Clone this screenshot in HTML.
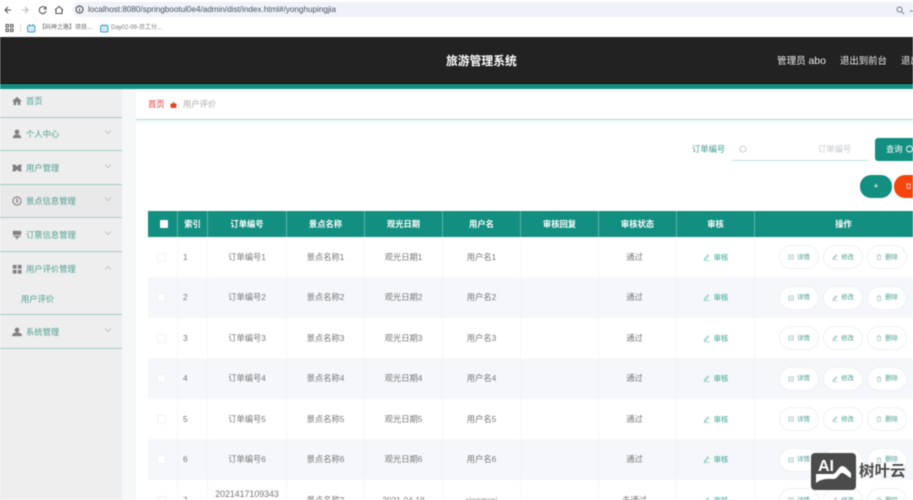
<!DOCTYPE html>
<html lang="zh"><head><meta charset="utf-8"><title>旅游管理系统</title>
<style>
*{box-sizing:border-box}
html,body{margin:0;padding:0;width:913px;height:500px;overflow:hidden;background:#fff}
body{position:relative;font-family:"Liberation Sans","Noto Sans CJK SC",sans-serif;color:#777}
.a{position:absolute;white-space:nowrap}
#soft{position:absolute;left:0;top:0;width:913px;height:500px;overflow:hidden;filter:blur(.45px)}
.side{position:absolute;left:0;width:122px;background:#eeeeee;border-bottom:1px solid #a3cbc5}
.side svg.i{position:absolute;left:12px;top:50%;margin-top:-5px;width:10px;height:10px;fill:#808080}
.side span{position:absolute;left:26px;top:50%;margin-top:-7px;line-height:14px;font-size:8.3px;color:#4f9f92}
.side svg.c{position:absolute;left:104px;top:50%;margin-top:-5px;width:8px;height:6px;fill:none;stroke:#b5bcbc;stroke-width:.8}
.row{position:absolute;left:148px;width:784px;display:grid;grid-template-columns:29px 30px 79px 78px 78px 78px 78px 78px 78px 178px;background:#fff}
.row>div{display:flex;align-items:center;justify-content:center;font-size:8.3px;line-height:11px;color:#777;border-left:1px solid #f6f7f9;text-align:center;position:relative}
.row>div:first-child{border-left:0}
.row.s{background:#f5f7fa}
.row.s>div{border-left-color:#f1f3f6}
.row.h{background:#128f80}
.row.h>div{color:#fff;font-weight:bold;border-left:1px solid #5ab6aa}
.row.h>div:first-child{border-left:0}
.row>div.n{justify-content:flex-start;padding-left:5px}
.row>div.st{padding-right:6px}
.cb{width:9px;height:9px;border:1px solid #eff1f3;background:#fff;border-radius:1px;display:block;margin-right:3px}
.h .cb{width:8px;height:8px;background:#fff;border-color:#fff;margin:0 0 0 2px}
.rv{color:#32a690!important;font-size:7.3px!important}
.rv svg{width:7px;height:7px;margin-right:4px;fill:none;stroke:#6cc2b2;stroke-width:.7}
.op{position:absolute;top:50%;margin-top:-12px;width:40px;height:24px;border:1px solid #eef0f2;border-radius:12px;background:#fff;font-size:6.4px;color:#4f9f92;display:flex;align-items:center;justify-content:center}
.op svg{width:6px;height:6px;margin-right:3px;fill:none;stroke:#86b5ad;stroke-width:.8}
.o1{left:24px}.o2{left:68px}.o3{left:112px}
</style></head><body>
<div id="soft">
<!-- browser chrome -->
<svg class="a" style="left:0;top:0" width="70" height="37" fill="none" stroke="#555" stroke-width="1.1">
<path d="M11 10H5M8 7l-3 3 3 3"/><path stroke="#bbb" d="M22 10h6M25 7l3 3-3 3"/>
<path d="M45.500 8a3.500 3.500 0 1 0 .6 3M46 6.500V9h-2.500"/><path d="M55 10l4-3.500 4 3.500M56 9.500V13.500h6V9.500"/>
<path stroke-width="1" d="M6 24.500h2.500v2.500H6zM10.500 24.500H13v2.500h-2.500zM6 29h2.500v2.500H6zM10.500 29H13v2.500h-2.500z"/></svg>
<div class="a" style="left:72px;top:2px;width:841px;height:15px;background:#f0f2fa;border-radius:8px 0 0 8px"></div>
<svg class="a" style="left:75px;top:5px" width="9" height="9" fill="none" stroke="#444"><circle cx="4.500" cy="4.500" r="3.500"/><path d="M4.500 4v2.500M4.500 2.500v.8"/></svg>
<div class="a" style="left:88px;top:4px;font-size:8.15px;line-height:11px;color:#45505f">localhost:8080/springbootul0e4/admin/dist/index.html#/yonghupingjia</div>
<svg class="a" style="left:896px;top:6px" width="17" height="9" fill="none" stroke="#777"><circle cx="3.500" cy="3.500" r="2.500"/><path d="M5.500 5.500l2.500 2.500M14 5h3"/></svg>
<div class="a" style="left:20px;top:24px;width:1px;height:8px;background:#ddd"></div>
<svg class="a" style="left:27px;top:24px" width="9" height="9" fill="#cfe9f4" stroke="#4a9fc4"><rect x=".5" y="1.500" width="7.500" height="6.500" rx="1.500"/><path d="M2.500 0v2M6 0v2"/></svg>
<div class="a" style="left:39px;top:23px;font-size:6px;line-height:10px;color:#666">【码神之路】项目...</div>
<svg class="a" style="left:100px;top:24px" width="9" height="9" fill="#cfe9f4" stroke="#4a9fc4"><rect x=".5" y="1.500" width="7.500" height="6.500" rx="1.500"/><path d="M2.500 0v2M6 0v2"/></svg>
<div class="a" style="left:111px;top:23px;font-size:6px;line-height:10px;color:#777">Day02-09-员工分...</div>

<!-- header -->
<div class="a" style="left:0;top:37px;width:913px;height:47px;background:#222;border-bottom:1px solid #111"></div>
<div class="a" style="left:0;top:84px;width:913px;height:5px;background:#128f80"></div>
<div class="a" style="left:446px;top:53px;font-size:11.800px;line-height:16px;font-weight:bold;color:#fff">旅游管理系统</div>
<div class="a" style="left:777px;top:54px;font-size:9.600px;line-height:14px;color:#eee">管理员 <span style="font-size:10.500px">abo</span></div>
<div class="a" style="left:840px;top:54px;font-size:9.400px;line-height:14px;color:#eee">退出到前台</div>
<div class="a" style="left:901px;top:54px;font-size:9.400px;line-height:14px;color:#eee">退出登录</div>

<!-- layout backgrounds -->
<div class="a" style="left:122px;top:89px;width:14px;height:411px;background:#f6f7f8"></div>
<div class="a" style="left:0;top:348px;width:122px;height:152px;background:#eeeeee"></div>

<!-- sidebar -->
<div class="side" style="top:89px;height:29px"><svg class="i" style="margin-top:-7px" viewBox="0 0 12 12"><path d="M6 1L0 6.500h2V11h3V7.500h2V11h3V6.500h2z"/></svg><span style="margin-top:-9px">首页</span></div>
<div class="side" style="top:118px;height:33px"><svg class="i" viewBox="0 0 12 12"><circle cx="6" cy="3.500" r="2.800"/><path d="M1 11c0-3 2-4.500 5-4.500s5 1.500 5 4.500z"/></svg><span>个人中心</span><svg class="c" viewBox="0 0 8 6"><path d="M1 1.500l3 3 3-3"/></svg></div>
<div class="side" style="top:151px;height:34px"><svg class="i" viewBox="0 0 12 12"><path d="M0 2h4l2 2 2-2h4l-1 2v4l1 2H8L6 8l-2 2H0l1-2V4z"/></svg><span>用户管理</span><svg class="c" viewBox="0 0 8 6"><path d="M1 1.500l3 3 3-3"/></svg></div>
<div class="side" style="top:185px;height:33px;background:#e9e9e9"><svg class="i" viewBox="0 0 12 12"><path fill-rule="evenodd" d="M6 .500a5.500 5.500 0 1 0 0 11 5.500 5.500 0 0 0 0-11zm0 1.300a4.200 4.200 0 1 1 0 8.400 4.200 4.200 0 0 1 0-8.400z"/><path d="M5.300 3h1.400l.3 5H5z"/></svg><span>景点信息管理</span><svg class="c" viewBox="0 0 8 6"><path d="M1 1.500l3 3 3-3"/></svg></div>
<div class="side" style="top:218px;height:34px"><svg class="i" viewBox="0 0 12 12"><path d="M1 1h10v5H1zM2 7h8v1.500H2zM5 8.500h2V11H5z"/></svg><span>订票信息管理</span><svg class="c" viewBox="0 0 8 6"><path d="M1 1.500l3 3 3-3"/></svg></div>
<div class="side" style="top:252px;height:63px">
<svg class="i" style="top:17px" viewBox="0 0 12 12"><path d="M1 1h4.500v4.500H1zM7 1h4.500v4.500H7zM1 7h4.500v4.500H1zM7 7h4.500v4.500H7z"/></svg><span style="top:17px">用户评价管理</span><svg class="c" style="top:18px" viewBox="0 0 8 6"><path d="M1 4.500l3-3 3 3"/></svg>
<span style="left:21px;top:47px">用户评价</span></div>
<div class="side" style="top:315px;height:34px"><svg class="i" viewBox="0 0 12 12"><circle cx="6" cy="3.500" r="2.800"/><path d="M0 11c0-3 2.500-4.500 6-4.500s6 1.500 6 4.500z"/></svg><span>系统管理</span><svg class="c" viewBox="0 0 8 6"><path d="M1 1.500l3 3 3-3"/></svg></div>

<!-- breadcrumb -->
<div class="a" style="left:136px;top:119px;width:777px;height:1px;background:#b6d8d4"></div>
<div class="a" style="left:136px;top:120px;width:777px;height:3px;background:#f3fafb"></div>
<div class="a" style="left:148px;top:98px;font-size:8.300px;line-height:13px;color:#e8354a">首页</div>
<svg class="a" style="left:170px;top:101px" width="7" height="7"><path d="M.5 2.500h6V6l-1 1h-4l-1-1z M2.500 2.500L3.500 .5 4.500 2.500z" fill="#e8431a"/></svg>
<div class="a" style="left:183px;top:98px;font-size:8.300px;line-height:13px;color:#aaa">用户评价</div>

<!-- search -->
<div class="a" style="left:692px;top:143px;font-size:8.300px;line-height:13px;color:#3f9a8d">订单编号</div>
<div class="a" style="left:732px;top:160px;width:136px;height:1px;background:#bfe0dc"></div>
<svg class="a" style="left:739px;top:145px" width="8" height="8" fill="none" stroke="#bbb" stroke-width=".8"><circle cx="4" cy="4" r="3"/></svg>
<div class="a" style="left:818px;top:143px;font-size:8.300px;line-height:13px;color:#c4c7cf">订单编号</div>
<div class="a" style="left:875px;top:138px;width:50px;height:23px;background:#128f80;border-radius:3px"></div>
<div class="a" style="left:886px;top:143px;font-size:8.300px;line-height:13px;color:#fff">查询</div>
<svg class="a" style="left:905px;top:145px" width="8" height="9" fill="none" stroke="#fff" stroke-width=".9"><circle cx="4.500" cy="4" r="3"/></svg>
<div class="a" style="left:860px;top:175px;width:32px;height:23px;background:#128f80;border-radius:11px;color:#fff;font-size:9px;line-height:22px;text-align:center">+</div>
<div class="a" style="left:894px;top:175px;width:36px;height:23px;background:#f4450f;border-radius:11px"></div>
<svg class="a" style="left:905px;top:182px" width="7" height="8" fill="none" stroke="#fbb" stroke-width=".9"><path d="M1 2h5M2 2v4.500h3V2"/></svg>

<!-- table -->
<div class="row h" style="top:211px;height:26px"><div><i class="cb"></i></div><div>索引</div><div>订单编号</div><div>景点名称</div><div>观光日期</div><div>用户名</div><div>审核回复</div><div>审核状态</div><div>审核</div><div>操作</div></div>

<svg width="0" height="0" style="position:absolute"><defs>
<symbol id="e" viewBox="0 0 8 8"><path d="M1 7.500h6.500M1.500 5.500L5.500 1l1 1-4 4.500H1.500z"/></symbol>
<symbol id="d" viewBox="0 0 8 8"><path d="M1 1h6v6H1zM2.500 3h3M2.500 5h3"/></symbol>
<symbol id="t" viewBox="0 0 8 8"><path d="M1 2h6M2 2v5.500h4V2M3 .8h2"/></symbol>
</defs></svg>

<div class="row" style="top:237px;height:40px"><div><i class="cb"></i></div><div class="n">1</div><div>订单编号1</div><div>景点名称1</div><div>观光日期1</div><div>用户名1</div><div></div><div class="st">通过</div><div class="rv"><svg><use href="#e"/></svg>审核</div><div><span class="op o1"><svg><use href="#d"/></svg>详情</span><span class="op o2"><svg><use href="#e"/></svg>修改</span><span class="op o3"><svg><use href="#t"/></svg>删除</span></div></div>
<div class="row s" style="top:277px;height:41px"><div><i class="cb"></i></div><div class="n">2</div><div>订单编号2</div><div>景点名称2</div><div>观光日期2</div><div>用户名2</div><div></div><div class="st">通过</div><div class="rv"><svg><use href="#e"/></svg>审核</div><div><span class="op o1"><svg><use href="#d"/></svg>详情</span><span class="op o2"><svg><use href="#e"/></svg>修改</span><span class="op o3"><svg><use href="#t"/></svg>删除</span></div></div>
<div class="row" style="top:318px;height:40px"><div><i class="cb"></i></div><div class="n">3</div><div>订单编号3</div><div>景点名称3</div><div>观光日期3</div><div>用户名3</div><div></div><div class="st">通过</div><div class="rv"><svg><use href="#e"/></svg>审核</div><div><span class="op o1"><svg><use href="#d"/></svg>详情</span><span class="op o2"><svg><use href="#e"/></svg>修改</span><span class="op o3"><svg><use href="#t"/></svg>删除</span></div></div>
<div class="row s" style="top:358px;height:41px"><div><i class="cb"></i></div><div class="n">4</div><div>订单编号4</div><div>景点名称4</div><div>观光日期4</div><div>用户名4</div><div></div><div class="st">通过</div><div class="rv"><svg><use href="#e"/></svg>审核</div><div><span class="op o1"><svg><use href="#d"/></svg>详情</span><span class="op o2"><svg><use href="#e"/></svg>修改</span><span class="op o3"><svg><use href="#t"/></svg>删除</span></div></div>
<div class="row" style="top:399px;height:40px"><div><i class="cb"></i></div><div class="n">5</div><div>订单编号5</div><div>景点名称5</div><div>观光日期5</div><div>用户名5</div><div></div><div class="st">通过</div><div class="rv"><svg><use href="#e"/></svg>审核</div><div><span class="op o1"><svg><use href="#d"/></svg>详情</span><span class="op o2"><svg><use href="#e"/></svg>修改</span><span class="op o3"><svg><use href="#t"/></svg>删除</span></div></div>
<div class="row s" style="top:439px;height:41px"><div><i class="cb"></i></div><div class="n">6</div><div>订单编号6</div><div>景点名称6</div><div>观光日期6</div><div>用户名6</div><div></div><div class="st">通过</div><div class="rv"><svg><use href="#e"/></svg>审核</div><div><span class="op o1"><svg><use href="#d"/></svg>详情</span><span class="op o2"><svg><use href="#e"/></svg>修改</span><span class="op o3"><svg><use href="#t"/></svg>删除</span></div></div>
<div class="row" style="top:480px;height:40px"><div><i class="cb"></i></div><div class="n">7</div><div style="font-size:8.800px">2021417109343<br>29</div><div>景点名称2</div><div>2021-04-18</div><div>xiaoqwei</div><div></div><div class="st">未通过</div><div class="rv"><svg><use href="#e"/></svg>审核</div><div><span class="op o1"><svg><use href="#d"/></svg>详情</span><span class="op o2"><svg><use href="#e"/></svg>修改</span><span class="op o3"><svg><use href="#t"/></svg>删除</span></div></div>

<!-- watermark -->
<div class="a" style="left:811px;top:453px;width:45px;height:37px;background:#4b4b4b;border-radius:4px;overflow:hidden">
<svg width="45" height="37" style="position:absolute;left:0;top:0"><path d="M5 21h17c3 0 6-8 9-8 3 0 6 4 9 7v5c-3-1-6-5-9-5-3 0-4 6-9 6-5 0-10-1-17 4z" fill="#fff"/></svg>
<div class="a" style="left:7px;top:5px;font-size:16px;line-height:17px;font-weight:bold;color:#fff">AI</div>
</div>
<div class="a" style="left:859px;top:462px;font-size:15.500px;line-height:19px;font-weight:bold;color:#4b4b4b">树叶云</div>
</div>
</body></html>
